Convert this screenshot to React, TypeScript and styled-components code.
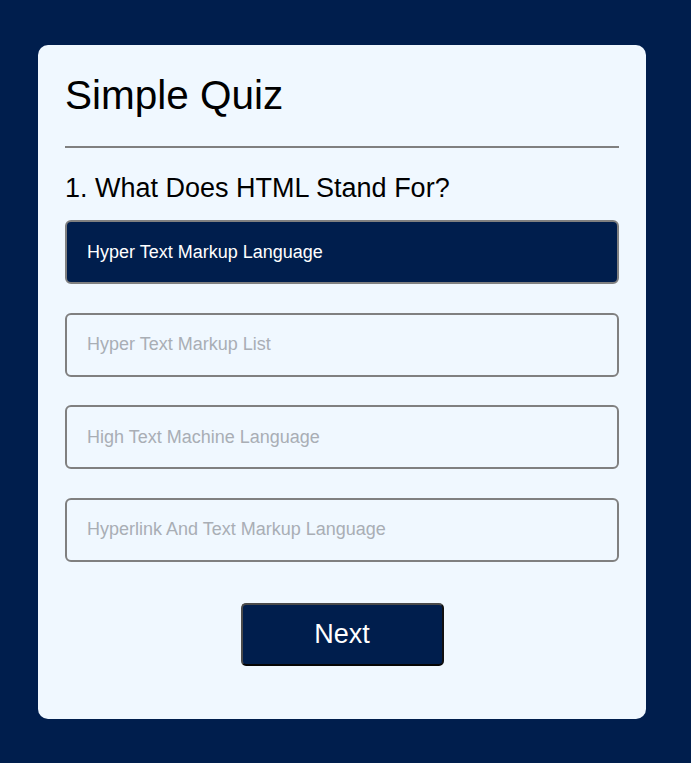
import React, { useState } from "react";
import styled, { createGlobalStyle } from "styled-components";

const GlobalStyle = createGlobalStyle`
  html, body {
    margin: 0;
    padding: 0;
    background: #001e4d;
    font-family: "Liberation Sans", Arial, sans-serif;
  }
  * { box-sizing: border-box; }
`;

const Page = styled.div`
  min-height: 763px;
  padding: 45px 45px 45px 38px;
  display: flex;
  justify-content: flex-start;
  align-items: flex-start;
`;

const Card = styled.div`
  width: 608px;
  background: #f0f8ff;
  border-radius: 10px;
  padding: 28px 27px 53px 27px;
  display: flex;
  flex-direction: column;
`;

const Title = styled.h1`
  margin: 0;
  font-size: 40.5px;
  font-weight: 400;
  color: #000;
  line-height: 44px;
  padding-bottom: 29px;
  border-bottom: 2px solid #808080;
`;

const Question = styled.h2`
  margin: 0;
  margin-top: 25px;
  font-size: 27px;
  font-weight: 400;
  color: #000;
  line-height: 30px;
`;

const Options = styled.div`
  margin-top: 17px;
  display: flex;
  flex-direction: column;
  gap: 28.5px;
`;

const Option = styled.button<{ $selected?: boolean }>`
  height: 64px;
  width: 100%;
  text-align: left;
  padding: 0 20px;
  border: 2px solid #808080;
  border-radius: 6px;
  background: ${(p) => (p.$selected ? "#001e4d" : "transparent")};
  color: ${(p) => (p.$selected ? "#ffffff" : "#a9aeb5")};
  font-family: "Liberation Sans", Arial, sans-serif;
  font-size: 18px;
  cursor: pointer;
`;

const NextButton = styled.button`
  align-self: center;
  margin-top: 41px;
  width: 203px;
  height: 63px;
  background: #001e4d;
  color: #fff;
  border-width: 2px;
  border-style: solid;
  border-color: #4a4a4a #111 #050505 #4a4a4a;
  border-radius: 5px;
  font-family: "Liberation Sans", Arial, sans-serif;
  font-size: 27px;
  cursor: pointer;
`;

const answers = [
  "Hyper Text Markup Language",
  "Hyper Text Markup List",
  "High Text Machine Language",
  "Hyperlink And Text Markup Language",
];

export default function App() {
  const [selected, setSelected] = useState(0);
  return (
    <>
      <GlobalStyle />
      <Page>
        <Card>
          <Title>Simple Quiz</Title>
          <Question>1. What Does HTML Stand For?</Question>
          <Options>
            {answers.map((a, i) => (
              <Option key={a} $selected={i === selected} onClick={() => setSelected(i)}>
                {a}
              </Option>
            ))}
          </Options>
          <NextButton>Next</NextButton>
        </Card>
      </Page>
    </>
  );
}
